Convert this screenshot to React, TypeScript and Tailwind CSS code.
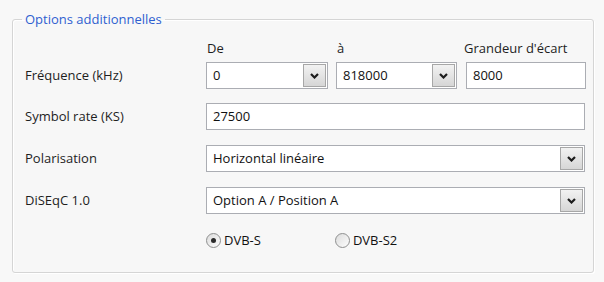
import React from "react";

const font = "font-['Open_Sans','Noto_Sans',sans-serif]";

function Chevron() {
  return (
    <svg width="9" height="6" viewBox="0 0 9 6" aria-hidden="true">
      <path d="M1 1 L4.5 4.5 L8 1" fill="none" stroke="#1c1c1c" strokeWidth="2.2" />
    </svg>
  );
}

function Combo({ value, width }: { value: string; width: string }) {
  return (
    <div
      className={`${width} flex h-[27px] items-center border border-[#abadb3] bg-white p-px`}
    >
      <span className="flex-1 pl-[5px] text-[13px] text-[#111]">{value}</span>
      <div className="flex h-full w-[23px] items-center justify-center border border-[#a7a7a7] bg-gradient-to-b from-[#f2f2f2] to-[#d6d6d6]">
        <Chevron />
      </div>
    </div>
  );
}

function Field({ value, width }: { value: string; width: string }) {
  return (
    <div className={`${width} flex h-[27px] items-center border border-[#abadb3] bg-white pl-[6px] text-[13px] text-[#111]`}>
      {value}
    </div>
  );
}

function Radio({ label, checked }: { label: string; checked?: boolean }) {
  return (
    <div className="flex items-center gap-[3px]">
      <div className="flex h-[15px] w-[15px] items-center justify-center rounded-full border border-[#8e8f8f] bg-gradient-to-br from-[#dcdcdc] to-[#fdfdfd]">
        {checked && <div className="h-[5px] w-[5px] rounded-full bg-[#2b2b2b]" />}
      </div>
      <span className="text-[13px] text-[#111]">{label}</span>
    </div>
  );
}

function Row({ label, children }: { label: string; children: React.ReactNode }) {
  return (
    <div className="flex items-center">
      <span className="w-[181px] text-[13px] text-[#1e1e1e]">{label}</span>
      {children}
    </div>
  );
}

export default function App() {
  return (
    <div className={`h-[282px] w-[604px] bg-[#f8f8f8] pl-[12px] pt-[11px] ${font}`}>
      <fieldset className="h-[262px] w-[582px] rounded-[3px] border border-[#d5d5d5] bg-[#f7f7f7] pl-[12px] shadow-[inset_1px_1px_0_#ffffff,1px_1px_0_#ffffff]">
        <legend className="-ml-[3px] px-[3px] text-[13px] leading-[16px] text-[#2f5fd0]">
          Options additionnelles
        </legend>

        <div className="flex flex-col">
          <div className="mt-[12px] flex h-[20px] items-center pl-[181px] text-[13px] text-[#1e1e1e]">
            <span className="w-[130px] pl-px">De</span>
            <span className="w-[128px] pl-px">à</span>
            <span>Grandeur d'écart</span>
          </div>

          <div className="mt-[3px]">
            <Row label="Fréquence (kHz)">
              <div className="flex gap-[8px]">
                <Combo value="0" width="w-[122px]" />
                <Combo value="818000" width="w-[121px]" />
                <Field value="8000" width="w-[120px] ml-px" />
              </div>
            </Row>
          </div>

          <div className="mt-[14px] flex flex-col gap-[15px]">
            <Row label="Symbol rate (KS)">
              <Field value="27500" width="w-[379px]" />
            </Row>
            <Row label="Polarisation">
              <Combo value="Horizontal linéaire" width="w-[379px]" />
            </Row>
            <Row label="DiSEqC 1.0">
              <Combo value="Option A / Position A" width="w-[379px]" />
            </Row>
          </div>

          <div className="mt-[17px] flex gap-[74px] pl-[181px]">
            <Radio label="DVB-S" checked />
            <Radio label="DVB-S2" />
          </div>
        </div>
      </fieldset>
    </div>
  );
}
